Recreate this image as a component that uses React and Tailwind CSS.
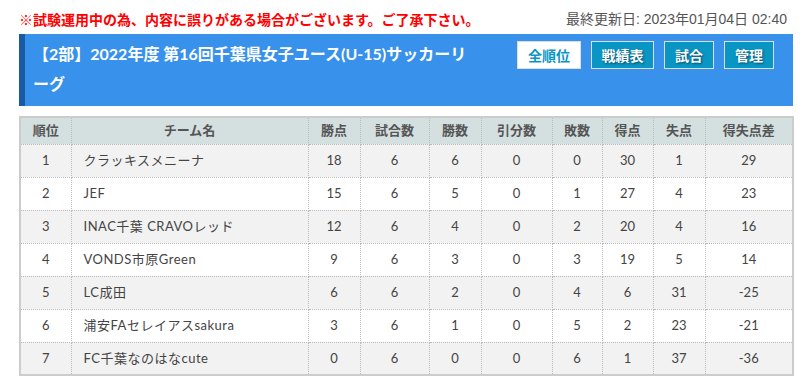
import React from 'react';

const rows = [
  [1, 'クラッキスメニーナ', 18, 6, 6, 0, 0, 30, 1, 29],
  [2, 'JEF', 15, 6, 5, 0, 1, 27, 4, 23],
  [3, 'INAC千葉 CRAVOレッド', 12, 6, 4, 0, 2, 20, 4, 16],
  [4, 'VONDS市原Green', 9, 6, 3, 0, 3, 19, 5, 14],
  [5, 'LC成田', 6, 6, 2, 0, 4, 6, 31, -25],
  [6, '浦安FAセレイアスsakura', 3, 6, 1, 0, 5, 2, 23, -21],
  [7, 'FC千葉なのはなcute', 0, 6, 0, 0, 6, 1, 37, -36],
];

const heads = ['順位', 'チーム名', '勝点', '試合数', '勝数', '引分数', '敗数', '得点', '失点', '得失点差'];
const widths = ['w-[51px]', 'w-[237px]', 'w-[52px]', 'w-[69px]', 'w-[52px]', 'w-[71px]', 'w-[50px]', 'w-[51px]', 'w-[52px]', 'w-[88px]'];

const buttons = ['戦績表', '試合', '管理'];

export default function App() {
  return (
    <div className="bg-white w-[809px] h-[386px] overflow-hidden pl-[19px] font-['Lato','Noto_Sans_CJK_JP',sans-serif] text-[#444]">
      {/* Top notice */}
      <div className="w-[774px] flex items-center justify-between h-[34px] pt-[5px]">
        <div className="text-[14px] font-bold text-[#ff0000]">※試験運用中の為、内容に誤りがある場合がございます。ご了承下さい。</div>
        <div className="text-[14px] text-[#555] pr-[6px] font-['Liberation_Sans','Noto_Sans_CJK_JP',sans-serif]">最終更新日: 2023年01月04日 02:40</div>
      </div>

      {/* Title band */}
      <div className="w-[774px] h-[72px] bg-[#3891ea] border-l-[6px] border-[#1a5aa0] flex items-start pl-[8px] pr-[19px]">
        <h1 className="w-[448px] pt-[5px] text-[16px] leading-[30px] font-bold text-white">
          【2部】2022年度 第16回千葉県女子ユース(U-15)サッカーリーグ
        </h1>
        <div className="ml-auto flex gap-[10px] pt-[7px]">
          <div className="w-[64px] h-[28px] bg-white border border-[#ddd] flex items-center justify-center text-[14px] font-bold text-[#0a95c6]">全順位</div>
          {buttons.map((b, i) => (
            <div
              key={b}
              className={`${i === 0 ? 'w-[63px]' : 'w-[50px]'} h-[28px] bg-[#0996c5] border border-[#ddd] flex items-center justify-center text-[14px] font-bold text-white [text-shadow:1px_1px_2px_rgba(0,0,0,0.5)]`}
            >
              {b}
            </div>
          ))}
        </div>
      </div>

      {/* Standings table */}
      <table className="mt-[10px] w-[773px] border-collapse border-2 border-[#ccc] text-[13px] table-fixed">
        <thead>
          <tr className="h-[27px] bg-[#d4dfe0]">
            {heads.map((h, i) => (
              <th key={h} className={`${widths[i]} font-bold text-[#555] border border-dotted border-[#bbb] text-center`}>{h}</th>
            ))}
          </tr>
        </thead>
        <tbody>
          {rows.map((r, ri) => (
            <tr key={r[0]} className={`h-[33px] ${ri % 2 === 0 ? 'bg-[#f2f2f2]' : 'bg-white'}`}>
              {r.map((c, ci) => (
                <td
                  key={ci}
                  className={`border border-dotted border-[#bbb] ${ci === 1 ? 'text-left pl-[12px] tracking-[0.5px]' : 'text-center'}`}
                >
                  {c}
                </td>
              ))}
            </tr>
          ))}
        </tbody>
      </table>
    </div>
  );
}
